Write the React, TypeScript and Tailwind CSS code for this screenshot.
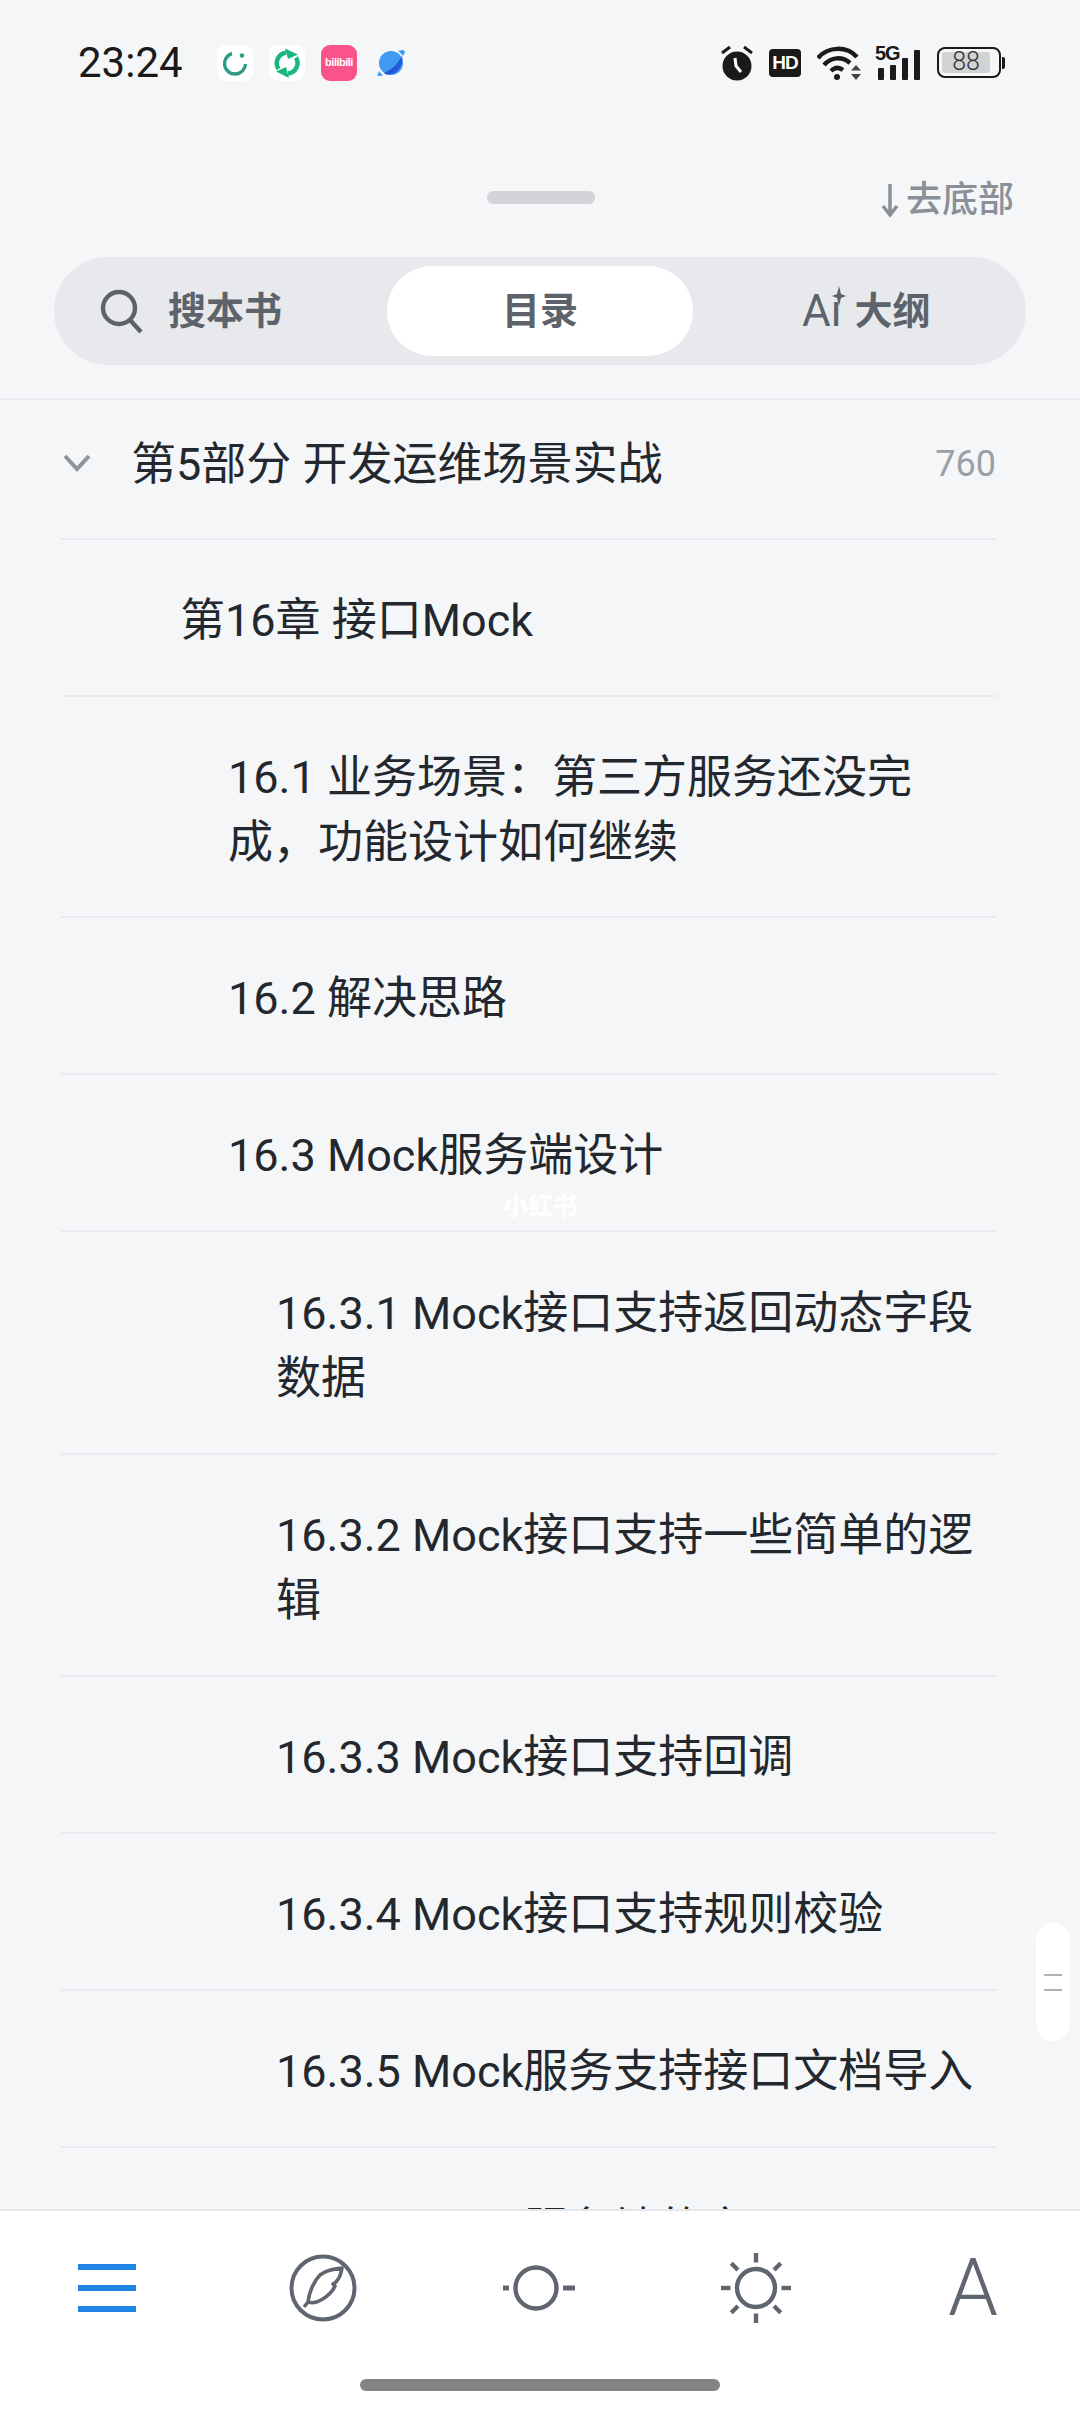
const rows = [
  { t: "第16章 接口Mock", pl: "pl-[119px]", h: "h-[157px]" },
  { t: "16.1 业务场景：第三方服务还没完成，功能设计如何继续", pl: "pl-[167px]", h: "h-[221px]" },
  { t: "16.2 解决思路", pl: "pl-[167px]", h: "h-[157px]" },
  { t: "16.3 Mock服务端设计", pl: "pl-[167px]", h: "h-[157px]" },
  { t: "16.3.1 Mock接口支持返回动态字段数据", pl: "pl-[215px]", h: "h-[223px]" },
  { t: "16.3.2 Mock接口支持一些简单的逻辑", pl: "pl-[215px]", h: "h-[222px]" },
  { t: "16.3.3 Mock接口支持回调", pl: "pl-[215px]", h: "h-[157px]" },
  { t: "16.3.4 Mock接口支持规则校验", pl: "pl-[215px]", h: "h-[157px]" },
  { t: "16.3.5 Mock服务支持接口文档导入", pl: "pl-[215px]", h: "h-[157px]" },
];

function Alarm() {
  return (
    <svg width="34" height="36" viewBox="0 0 34 36">
      <circle cx="17" cy="21" r="14.5" fill="#1a1a1a" />
      <path d="M2 8 L10 2 M32 8 L24 2" stroke="#1a1a1a" strokeWidth="3" />
      <path d="M15 13 L16 21 L21 27" stroke="#fff" strokeWidth="3" fill="none" />
    </svg>
  );
}

function Wifi() {
  return (
    <svg width="45" height="34" viewBox="0 0 45 34" fill="none" stroke="#1a1a1a" strokeWidth="4.5">
      <path d="M1 12 C11 0 30 0 40 11" />
      <path d="M7 19 C14 11 25 10 33 17" />
      <path d="M14 25 C18 21 22 21 26 24" />
      <circle cx="20" cy="31" r="3" fill="#1a1a1a" stroke="none" />
      <path d="M39 19 l5 5.5 h-10 z M39 34 l5 -6 h-10 z" fill="#444" stroke="none" />
    </svg>
  );
}

function Signal() {
  return (
    <div className="relative w-[46px] h-[34px]">
      <span className="absolute left-0 -top-[3px] text-[20px] leading-[20px] font-bold text-[#1a1a1a] tracking-[-1px] font-['Liberation_Sans',sans-serif]">5G</span>
      <div className="absolute inset-0 flex items-end pl-[3px] gap-[6px]">
        <div className="w-[6px] h-[12px] rounded-[1px] bg-[#1a1a1a]" />
        <div className="w-[6px] h-[15px] rounded-[1px] bg-[#1a1a1a]" />
        <div className="w-[6px] h-[22px] rounded-[1px] bg-[#1a1a1a]" />
        <div className="w-[6px] h-[30px] rounded-[1px] bg-[#1a1a1a]" />
      </div>
    </div>
  );
}

function Feather() {
  return (
    <svg width="68" height="68" viewBox="0 0 68 68" fill="none" stroke="#5f6670" strokeWidth="3.6">
      <circle cx="34" cy="34" r="31.5" strokeWidth="4" />
      <path d="M15 53 L19 48 C20 38 25 27 31 21 C37 16 45 15 53 14 C52 20 50 25 47 28 L44 30 L46 32 C44 37 38 43 32 46 C27 49 22 49 19 48" strokeLinejoin="round" />
    </svg>
  );
}

function Moon() {
  return (
    <svg width="80" height="80" viewBox="0 0 80 80" fill="none" stroke="#5f6670" strokeWidth="4.4">
      <circle cx="40" cy="40" r="20.5" />
      <path d="M7 40 H13 M67 40 H79" strokeWidth="5" />
    </svg>
  );
}

function Sun() {
  const angles = [0, 45, 90, 135, 180, 225, 270, 315];
  return (
    <svg width="80" height="80" viewBox="0 0 80 80" fill="none" stroke="#5f6670" strokeWidth="4.4">
      <circle cx="40" cy="40" r="19" />
      {angles.map((a) => (
        <path key={a} d="M40 5 V14.5" transform={`rotate(${a} 40 40)`} />
      ))}
    </svg>
  );
}

export default function App() {
  return (
    <div className="w-[1080px] h-[2412px] bg-[#f4f6f8] flex flex-col overflow-hidden relative font-['Roboto','Noto_Sans_CJK_SC',sans-serif]">
      <div className="h-[125px] shrink-0 flex items-center pl-[78px] pr-[75px] justify-between">
        <div className="flex items-center">
          <span className="text-[42px] text-[#1a1a1a] leading-none w-[139px]">23:24</span>
          <div className="flex items-center gap-[16px]">
            <div className="w-[36px] h-[36px] rounded-[9px] bg-white">
              <svg width="36" height="36" viewBox="0 0 36 36" fill="none" stroke="#2c9c83" strokeWidth="3.4">
                <path d="M15 8.5 A10.5 10.5 0 1 0 28.5 19" />
                <circle cx="25" cy="10.5" r="2.2" fill="#2c9c83" stroke="none" />
              </svg>
            </div>
            <div className="w-[36px] h-[36px] rounded-[9px] bg-white">
              <svg width="36" height="36" viewBox="0 0 36 36" fill="none" stroke="#18b87c" strokeWidth="4.5">
                <path d="M9.5 24 A10.5 10.5 0 0 1 17 7.8" />
                <path d="M27 12.5 A10.5 10.5 0 0 1 19 28.4" />
                <path d="M16 3.5 L29 9.5 L19 14 Z M20 33 L7 26.5 L17 22 Z" fill="#18b87c" stroke="none" />
              </svg>
            </div>
            <div className="w-[36px] h-[36px] rounded-[9px] bg-[#f9538a] flex items-center justify-center text-[11px] tracking-[-0.5px] leading-none font-bold text-white overflow-hidden font-['Liberation_Sans',sans-serif]">bilibili</div>
            <div className="w-[36px] h-[36px] rounded-[9px] bg-[#f6f7f9]">
              <svg width="36" height="36" viewBox="0 0 36 36">
                <circle cx="18" cy="18" r="12" fill="#3f9bf2" />
                <path d="M29 5 C32 5 33 7 30 11 C28 9 27 7 25 6 Z M5 29 C3 31 7 32 10 30 C8 29 7 27 6 26 Z" fill="#3f9bf2" />
                <path d="M29 11 C31 20 25 30 15 29.5 C13 29.5 12 29 11 28 C18 25 25 19 29 11 Z" fill="#2459d6" />
              </svg>
            </div>
          </div>
        </div>
        <div className="flex items-center">
          <Alarm />
          <div className="ml-[15px] w-[32px] h-[28px] rounded-[4px] bg-[#1a1a1a] text-white text-[19px] font-bold leading-[28px] text-center font-['Liberation_Sans',sans-serif] tracking-[-1px]">HD</div>
          <div className="ml-[16px]"><Wifi /></div>
          <div className="ml-[13px]"><Signal /></div>
          <div className="flex items-center ml-[16px]">
            <div className="w-[64px] h-[31px] rounded-[8px] border-[2.5px] border-[#1a1a1a] py-[3px] pl-[3px] pr-[9px]">
              <div className="w-full h-full rounded-[3px] bg-[#d2d3d5] text-[25px] leading-[20px] font-light text-center text-[#333]">88</div>
            </div>
            <div className="ml-[1px] w-[3px] h-[12px] bg-[#1a1a1a] rounded-r-[2px]" />
          </div>
        </div>
      </div>

      <div className="h-[275px] shrink-0 relative border-b-2 border-[#e9ebee]">
        <div className="absolute left-[487px] top-[66px] w-[108px] h-[13px] rounded-[6px] bg-[#d2d4d8]" />
        <div className="absolute right-[66px] top-[53px] flex items-center text-[36px] font-medium leading-[44px] text-[#8b9098]">
          <svg width="22" height="36" viewBox="0 0 22 36" fill="none" stroke="#8b9098" strokeWidth="3.5" className="mr-[5px]">
            <path d="M11 2 V32 M4 24 L11 33 L18 24" />
          </svg>
          去底部
        </div>
        <div className="absolute left-[54px] top-[132px] w-[972px] h-[108px] rounded-[54px] bg-[#e7e9ec] flex items-center px-[13px] text-[38px] font-bold text-[#5d636b]">
          <div className="w-[320px] flex items-center pl-[33px] gap-[24px]">
            <svg width="44" height="44" viewBox="0 0 44 44" fill="none" stroke="#5d636b" strokeWidth="4.4">
              <circle cx="19" cy="19" r="16" />
              <path d="M30 31 L41 43" />
            </svg>
            <span>搜本书</span>
          </div>
          <div className="w-[306px] h-[90px] rounded-[45px] bg-white flex items-center justify-center">目录</div>
          <div className="flex-1 flex items-center gap-[11px] pl-[109px]">
            <span className="relative font-normal text-[44px] leading-none">
              Aı
              <svg width="14" height="20" viewBox="0 0 14 20" className="absolute -right-[4px] -top-[3px]">
                <path d="M7 0 L9 8 L14 10 L9 12 L7 20 L5 12 L0 10 L5 8 Z" fill="#5d636b" />
              </svg>
            </span>
            <span className="ml-[2px]">大纲</span>
          </div>
        </div>
      </div>

      <div className="flex-1 min-h-0 overflow-hidden pl-[61px] pr-[84px] text-[#23272e] text-[45px] leading-[65px]">
        <div className="h-[140px] flex items-center border-b-2 border-[#e9ebee] pb-[9px]">
          <svg width="28" height="20" viewBox="0 0 28 20" fill="none" stroke="#8f959c" strokeWidth="4" className="mr-[40px] ml-[2px] -mt-[4px] shrink-0">
            <path d="M2 3 L14 16 L26 3" />
          </svg>
          <span className="flex-1">第5部分 开发运维场景实战</span>
          <span className="text-[#9aa0a7] text-[36px]">760</span>
        </div>
        {rows.map((r) => (
          <div key={r.t} className={`${r.h} ${r.pl} flex items-center border-b-2 border-[#e9ebee] pt-[6px]`}>
            <span>{r.t}</span>
          </div>
        ))}
        <div className="h-[157px] pl-[215px] pt-[6px] flex items-center">
          <span>16.3.6 Mock服务端的实现</span>
        </div>
      </div>

      <div className="absolute right-[10px] top-[1923px] w-[34px] h-[118px] rounded-[17px] bg-white flex flex-col items-center justify-center gap-[13px]">
        <div className="w-[18px] h-[2px] bg-[#b0b2b6]" />
        <div className="w-[18px] h-[2px] bg-[#b0b2b6]" />
      </div>

      <div className="absolute left-[503px] top-[1190px] text-[25px] font-black leading-[34px] text-white/90">小红书</div>

      <div className="h-[203px] shrink-0 bg-white border-t-2 border-[#e5e7ea] relative z-10">
        <div className="h-[153px] flex items-center pl-[78px]">
          <div className="w-[58px] flex flex-col gap-[15px]">
            <div className="h-[6px] bg-[#1f84e4]" />
            <div className="h-[6px] bg-[#1f84e4]" />
            <div className="h-[6px] bg-[#1f84e4]" />
          </div>
          <div className="ml-[153px]"><Feather /></div>
          <div className="ml-[139px]"><Moon /></div>
          <div className="ml-[140px]"><Sun /></div>
          <span className="ml-[152px] text-[80px] leading-none text-[#5f6670] font-light">A</span>
        </div>
        <div className="mx-auto mt-[15px] w-[360px] h-[12px] rounded-[6px] bg-[#838383]" />
      </div>
    </div>
  );
}
